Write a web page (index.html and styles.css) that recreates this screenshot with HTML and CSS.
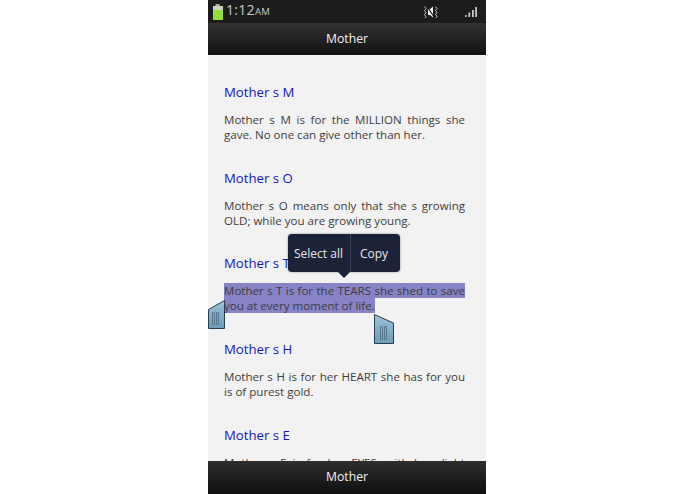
FILE: index.html
```html
<!DOCTYPE html>
<html lang="en">
<head>
<meta charset="utf-8">
<title>Mother</title>
<link rel="stylesheet" href="styles.css">
</head>
<body>
<div class="phone">
  <div class="status">
    <div class="status-left">
      <svg class="battery" width="12" height="16" viewBox="0 0 12 16"><rect x="3.500" y="0" width="4" height="2" fill="#a9b3a2"/><path d="M1 2h10v4H1z" fill="#c9d6bd"/><path d="M1 6h10v10H1z" fill="#93e03a"/></svg>
      <span class="clock">1:12<small>AM</small></span>
    </div>
    <div class="status-right">
      <svg class="mute" width="15" height="12" viewBox="0 0 15 12" fill="none" stroke="#d8d8d8"><path d="M5 3l2 0 3-2.500v11L7 9H5z" fill="#efefef" stroke="none"/><path d="M4 .5l7.500 11" stroke="#1c1c1c" stroke-width="1.200"/><path d="M1.500.5l1.500 2-1.500 2 1.500 2-1.500 2 1.500 2-1 1.500M12.500.5l1.500 2-1.500 2 1.500 2-1.500 2 1.500 2-1 1.500" stroke-width=".9"/></svg>
      <svg class="signal" width="12" height="10" viewBox="0 0 12 10" fill="#c8c8c8"><rect x="0" y="8" width="1.500" height="2"/><rect x="3.400" y="5.500" width="1.800" height="4.500"/><rect x="7" y="3" width="1.800" height="7"/><rect x="10.200" y="0" width="1.800" height="10"/></svg>
    </div>
  </div>
  <div class="bar top-bar">Mother</div>
  <main class="content">
    <section class="item">
      <h2>Mother s M</h2>
      <p>Mother s M is for the MILLION things she gave. No one can give other than her.</p>
    </section>
    <section class="item">
      <h2>Mother s O</h2>
      <p>Mother s O means only that she s growing OLD; while you are growing young.</p>
    </section>
    <section class="item">
      <h2>Mother s T</h2>
      <p><span class="selected">Mother s T is for the TEARS she shed to save you at every moment of life.</span></p>
    </section>
    <section class="item">
      <h2>Mother s H</h2>
      <p>Mother s H is for her HEART she has for you is of purest gold.</p>
    </section>
    <section class="item">
      <h2>Mother s E</h2>
      <p>Mother s E is for her EYES; with love light shining.</p>
    </section>
    <div class="popup">
      <span class="popup-btn">Select all</span>
      <span class="popup-btn">Copy</span>
    </div>
    <svg class="handle handle-left" width="17" height="29" viewBox="0 0 17 29"><defs><linearGradient id="hl" x1="0" y1="0" x2="0" y2="1"><stop offset="0" stop-color="#9cc3d8"/><stop offset="1" stop-color="#6c9cba"/></linearGradient></defs><path d="M.5 9.500L16.500.5v28H.5z" fill="url(#hl)" stroke="#2c3d4a"/><path d="M4.500 12.500h2v12h-2zM8.500 12.500h2v12h-2z" stroke="#54798f" fill="none"/></svg>
    <svg class="handle handle-right" width="20" height="30" viewBox="0 0 20 30"><defs><linearGradient id="hr" x1="0" y1="0" x2="0" y2="1"><stop offset="0" stop-color="#9cc3d8"/><stop offset="1" stop-color="#6c9cba"/></linearGradient></defs><path d="M.5.5L19.500 9v20.500H.5z" fill="url(#hr)" stroke="#2c3d4a"/><path d="M6.500 12.500h2v13h-2zM10.500 12.500h2v13h-2z" stroke="#54798f" fill="none"/></svg>
  </main>
  <div class="bar bottom-bar">Mother</div>
</div>
</body>
</html>
```
FILE: styles.css
```css
html, body {
  margin: 0;
  padding: 0;
  background: #fff;
  height: 100%;
  overflow: hidden;
}
body {
  display: flex;
  padding-left: 208px;
  font-family: "Open Sans", "Noto Sans", sans-serif;
}
.phone {
  width: 278px;
  height: 494px;
  display: flex;
  flex-direction: column;
  background: #f2f2f2;
  overflow: hidden;
}
.status {
  height: 23px;
  flex: none;
  box-sizing: border-box;
  background: #1c1c1c;
  display: flex;
  justify-content: space-between;
  align-items: center;
  padding: 0 9px 0 4px;
}
.status-left {
  display: flex;
  align-items: center;
  gap: 2px;
}
.clock {
  color: #c9c9c9;
  font-size: 14px;
  line-height: 20px;
  padding-bottom: 1px;
  letter-spacing: .3px;
}
.clock small {
  font-size: 9.500px;
}
.status-right {
  display: flex;
  align-items: center;
  gap: 27px;
}
.bar {
  flex: none;
  display: flex;
  align-items: center;
  justify-content: center;
  color: #f2f2f2;
  font-size: 12.200px;
  background: linear-gradient(#333, #111);
}
.top-bar {
  height: 32px;
  padding-bottom: 2px;
  box-sizing: border-box;
}
.bottom-bar {
  height: 33px;
  padding-bottom: 2px;
  box-sizing: border-box;
  background: linear-gradient(#2e2e2e, #0f0f0f);
}
.content {
  flex: 1;
  min-height: 0;
  position: relative;
  overflow: hidden;
  padding: 27px 21px 0 16px;
}
.item {
  height: 85.700px;
}
.item h2 {
  margin: 0;
  font-size: 13.200px;
  line-height: 20px;
  font-weight: 400;
  color: #1414c8;
}
.item p {
  margin: 10px 0 0;
  font-size: 11.550px;
  line-height: 15px;
  color: #3d3d3d;
  text-align: justify;
}
.selected {
  background: #8783c6;
}
.popup {
  position: absolute;
  left: 80px;
  top: 179px;
  height: 38px;
  display: flex;
  background: #1c2339;
  border-radius: 4px;
  box-shadow: 0 0 2px rgba(0, 0, 0, .5);
}
.popup::after {
  content: "";
  position: absolute;
  left: 50px;
  top: 38px;
  border: 6px solid transparent;
  border-top-color: #1c2339;
  border-bottom: 0;
}
.popup-btn {
  display: flex;
  align-items: center;
  padding: 0 7px 0 6px;
  color: #e4e6ee;
  font-size: 12px;
}
.popup-btn + .popup-btn {
  border-left: 1px solid #39405a;
  padding: 0 12px 0 9px;
}
.handle {
  position: absolute;
}
.handle-left {
  left: 0;
  top: 245px;
}
.handle-right {
  left: 166px;
  top: 259px;
}
```
